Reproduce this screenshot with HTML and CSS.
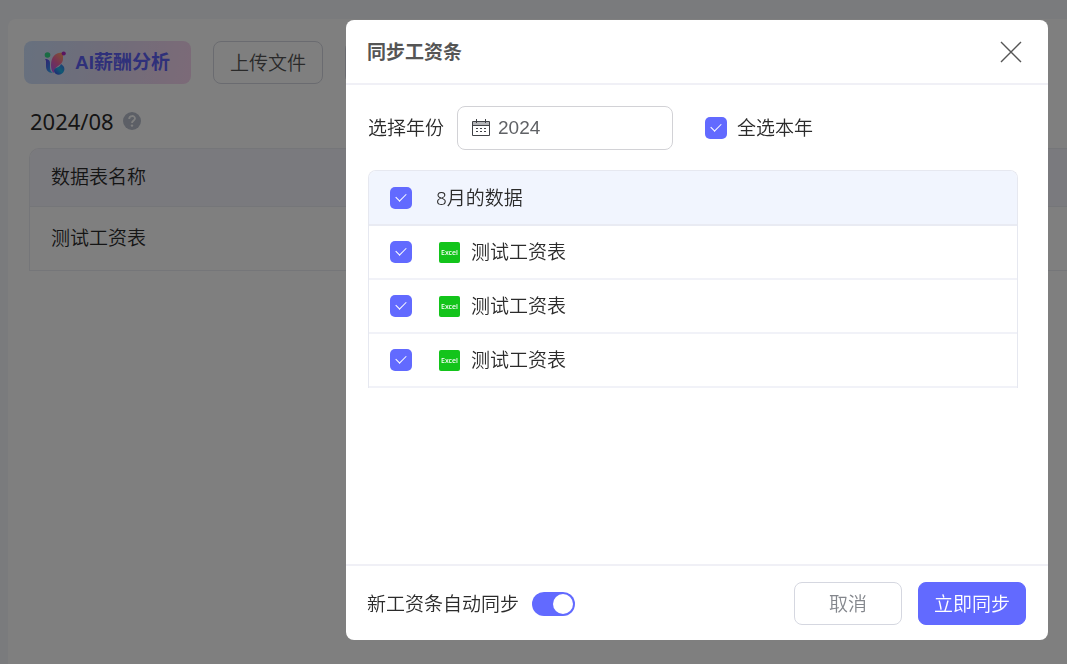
FILE: index.html
```html
<!DOCTYPE html>
<html lang="zh-CN">
<head>
<meta charset="utf-8">
<meta name="viewport" content="width=device-width, initial-scale=1">
<title>同步工资条</title>
<link rel="stylesheet" href="styles.css">
</head>
<body>
<main class="page">
  <div class="toolbar">
    <button class="btn btn-ai" type="button">
      <svg class="ai-logo" viewBox="0 0 22 24" aria-hidden="true">
        <defs>
          <linearGradient id="g1" x1="0" y1="0" x2="1" y2="1"><stop offset="0" stop-color="#6a3fe8"/><stop offset=".5" stop-color="#3f7cf0"/><stop offset="1" stop-color="#35c8f5"/></linearGradient>
          <linearGradient id="g2" x1=".8" y1="0" x2=".2" y2="1"><stop offset="0" stop-color="#ff9f6a"/><stop offset=".5" stop-color="#ee62a8"/><stop offset="1" stop-color="#b35cf2"/></linearGradient>
          <linearGradient id="g3" x1="1" y1="0" x2="0" y2="1"><stop offset="0" stop-color="#3f6cec"/><stop offset=".5" stop-color="#20b6e8"/><stop offset="1" stop-color="#4738e8"/></linearGradient>
        </defs>
        <circle cx="3.500" cy="4" r="2.800" fill="#35d888"/>
        <path d="M1 8c3 0 5 1 5 4v4c0 3 1 5 3 6-5 0-7-3-7-7v-4c0-1 0-2-1-3z" fill="url(#g1)"/>
        <path d="M19 1.500v6c0 4-2 5.500-5 7.500-3 2-4 4-4 7-2-1-3-4-3-8C7 6 11 1.500 19 1.500z" fill="url(#g2)"/>
        <circle cx="19.700" cy="2.500" r="2.100" fill="#b52bc0"/>
        <path d="M17 13c3 2 4 4 3 7-2 5-9 5-10 0 0-4 6-3 7-7z" fill="url(#g3)"/>
      </svg>
      <span>AI薪酬分析</span>
    </button>
    <button class="btn btn-plain" type="button">上传文件</button>
    <span class="btn btn-plain"></span>
  </div>

  <h1 class="period">2024/08
    <svg class="help" viewBox="0 0 18 18" aria-hidden="true">
      <circle cx="9" cy="9" r="9" fill="#b8bfcc"/>
      <path d="M6.200 7c0-4 5.800-3.800 5.800-.4C12 8.500 9 8.500 9 11" fill="none" stroke="#fff" stroke-width="1.800"/>
      <circle cx="9" cy="13.600" r="1.200" fill="#fff"/>
    </svg>
  </h1>

  <table class="data-table">
    <thead><tr><th>数据表名称</th></tr></thead>
    <tbody><tr><td>测试工资表</td></tr></tbody>
  </table>
</main>

<div class="overlay">
  <section class="dialog" role="dialog" aria-modal="true" aria-labelledby="dialog-title">
    <header class="dialog-head">
      <h2 id="dialog-title">同步工资条</h2>
      <button class="close" type="button" aria-label="关闭">
        <svg viewBox="0 0 22 22" aria-hidden="true"><path d="M1 1l20 20M21 1L1 21" stroke="#555" stroke-width="1.400" fill="none"/></svg>
      </button>
    </header>

    <div class="dialog-body">
      <div class="filters">
        <label for="year">选择年份</label>
        <div class="year-field">
          <svg class="calendar" viewBox="0 0 18 18" aria-hidden="true">
            <path d="M1 3h16v3H1z" fill="#b4b5b8"/>
            <path d="M.5 2.500h17v14H.5zM.5 6.500h17M4.500 0v4M13.500 0v4" fill="none" stroke="#404246"/>
            <path d="M4 9.500h2M8 9.500h2M12 9.500h2M4 12.500h2M8 12.500h2M12 12.500h2" stroke="#404246"/>
          </svg>
          <input id="year" type="text" value="2024">
        </div>
        <label class="select-all"><input class="check" type="checkbox" checked>全选本年</label>
      </div>

      <table class="sheet-table">
        <thead>
          <tr><th><label class="row-label"><input class="check" type="checkbox" checked>8月的数据</label></th></tr>
        </thead>
        <tbody>
          <tr><td><label class="row-label"><input class="check" type="checkbox" checked><span class="file"><span class="excel">Excel</span>测试工资表</span></label></td></tr>
          <tr><td><label class="row-label"><input class="check" type="checkbox" checked><span class="file"><span class="excel">Excel</span>测试工资表</span></label></td></tr>
          <tr><td><label class="row-label"><input class="check" type="checkbox" checked><span class="file"><span class="excel">Excel</span>测试工资表</span></label></td></tr>
        </tbody>
      </table>
    </div>

    <footer class="dialog-foot">
      <label class="auto-sync">新工资条自动同步<input class="switch" type="checkbox" role="switch" checked></label>
      <button class="btn btn-cancel" type="button">取消</button>
      <button class="btn btn-primary" type="button">立即同步</button>
    </footer>
  </section>
</div>
</body>
</html>
```

FILE: styles.css
```css
* {
  box-sizing: border-box;
}

body {
  margin: 0;
  min-height: 100vh;
  padding: 19px 0 0 8px;
  display: flex;
  overflow: hidden;
  background: #f4f6fa;
  color: #2b2b2b;
  font: 350 19px/28px "Noto Sans", "Noto Sans CJK SC", sans-serif;
}

button,
input {
  font: inherit;
  color: inherit;
  margin: 0;
}

.page {
  flex: 1;
  min-width: 0;
  padding: 22px 0 0 16px;
  background: #fff;
  border-radius: 8px 0 0 0;
}

.toolbar {
  display: flex;
  gap: 22px;
}

.btn {
  height: 43px;
  padding: 0 15px;
  border: 1px solid #d5d7e0;
  border-radius: 8px;
  background: #fff;
  white-space: nowrap;
}

.btn-plain {
  padding: 0 16px;
  color: #555;
}

.btn-ai {
  display: flex;
  align-items: center;
  gap: 9px;
  padding: 0 21px 0 20px;
  border: 0;
  background: linear-gradient(100deg, #cfe2fd, #e1daf3 50%, #f8d5f0);
  color: #5e61f5;
  font-family: "Liberation Sans", "Noto Sans CJK SC", sans-serif;
  font-weight: 700;
}

.ai-logo {
  width: 22px;
  height: 24px;
}

.period {
  display: flex;
  align-items: center;
  gap: 9px;
  margin: 21px 0 11px 6px;
  font-size: 22px;
  line-height: 32px;
  font-weight: 400;
}

.help {
  width: 18px;
  height: 18px;
}

.data-table {
  width: calc(100% - 5px);
  margin-left: 5px;
  border: 1px solid #ebecf2;
  border-right: 0;
  border-radius: 10px 0 0 0;
  border-spacing: 0;
}

.data-table th,
.data-table td {
  height: 63px;
  padding: 0 21px 2px;
  text-align: left;
  font-weight: 350;
}

.data-table th {
  height: 58px;
  background: #f5f4fd;
  border-bottom: 1px solid #ebecf2;
  border-radius: 9px 0 0 0;
}

.overlay {
  position: fixed;
  inset: 0;
  display: flex;
  justify-content: flex-end;
  padding: 20px 19px 24px;
  background: rgba(0, 0, 0, 0.5);
}

.dialog {
  width: 66%;
  min-width: 702px;
  display: flex;
  flex-direction: column;
  background: #fff;
  border-radius: 8px;
}

.dialog-head {
  display: flex;
  align-items: center;
  justify-content: space-between;
  padding: 18px 26px 17px 21px;
  border-bottom: 2px solid #f0f0f6;
}

.dialog-head h2 {
  margin: 0;
  font-size: 19px;
  font-weight: 700;
  color: #555;
}

.close {
  width: 22px;
  height: 22px;
  padding: 0;
  border: 0;
  background: none;
}

.close svg {
  display: block;
}

.dialog-body {
  flex: 1;
  padding: 21px 30px 21px 22px;
}

.filters {
  display: flex;
  align-items: center;
  margin-bottom: 20px;
}

.year-field {
  display: flex;
  align-items: center;
  gap: 8px;
  width: 216px;
  height: 44px;
  margin: 0 32px 0 13px;
  padding: 0 14px;
  border: 1px solid #d2d2d6;
  border-radius: 8px;
}

.year-field input {
  flex: 1;
  min-width: 0;
  padding: 0;
  border: 0;
  outline: 0;
  background: none;
  color: #606266;
  font-family: "Liberation Sans", sans-serif;
}

.calendar {
  flex: none;
  width: 18px;
  height: 18px;
}

.select-all {
  display: flex;
  align-items: center;
  gap: 10px;
}

.check {
  appearance: none;
  flex: none;
  display: grid;
  place-items: center;
  width: 22px;
  height: 22px;
  border-radius: 5px;
  background: #d5d7e0;
}

.check:checked {
  background: #626aff;
}

.check:checked::before {
  content: "";
  width: 5px;
  height: 9px;
  margin-bottom: 4px;
  border: solid #fff;
  border-width: 0 1px 1px 0;
  transform: rotate(45deg);
}

.sheet-table {
  width: 100%;
  border: 1px solid #e6e8f0;
  border-bottom: 0;
  border-radius: 8px 8px 0 0;
  border-spacing: 0;
}

.sheet-table th,
.sheet-table td {
  height: 54px;
  padding: 0 21px;
  border-bottom: 2px solid #f1f2f8;
  text-align: left;
  font-weight: 350;
}

.sheet-table th {
  height: 55px;
  background: #f1f5fe;
  border-bottom-color: #e9ebf3;
  border-radius: 7px 7px 0 0;
}

.row-label {
  display: flex;
  align-items: center;
  gap: 24px;
}

.file {
  display: flex;
  align-items: center;
  gap: 11px;
  margin-left: 3px;
}

.excel {
  width: 21px;
  height: 21px;
  border-radius: 2px;
  background: #13c41b;
  color: #fff;
  font-size: 7px;
  font-weight: 500;
  line-height: 21px;
  text-align: center;
}

.dialog-foot {
  display: flex;
  align-items: center;
  gap: 16px;
  padding: 16px 22px 15px 21px;
  border-top: 2px solid #f0f0f6;
}

.auto-sync {
  display: flex;
  align-items: center;
  gap: 13px;
  margin-right: auto;
}

.switch {
  appearance: none;
  display: flex;
  width: 43px;
  height: 24px;
  padding: 2px;
  border-radius: 12px;
  background: #d5d7e0;
}

.switch:checked {
  justify-content: flex-end;
  background: #626aff;
}

.switch::before {
  content: "";
  width: 20px;
  height: 20px;
  border-radius: 50%;
  background: #fff;
}

.btn-cancel,
.btn-primary {
  min-width: 108px;
}

.btn-cancel {
  color: #84878d;
}

.btn-primary {
  border-color: #626aff;
  background: #626aff;
  color: #fff;
}
```
